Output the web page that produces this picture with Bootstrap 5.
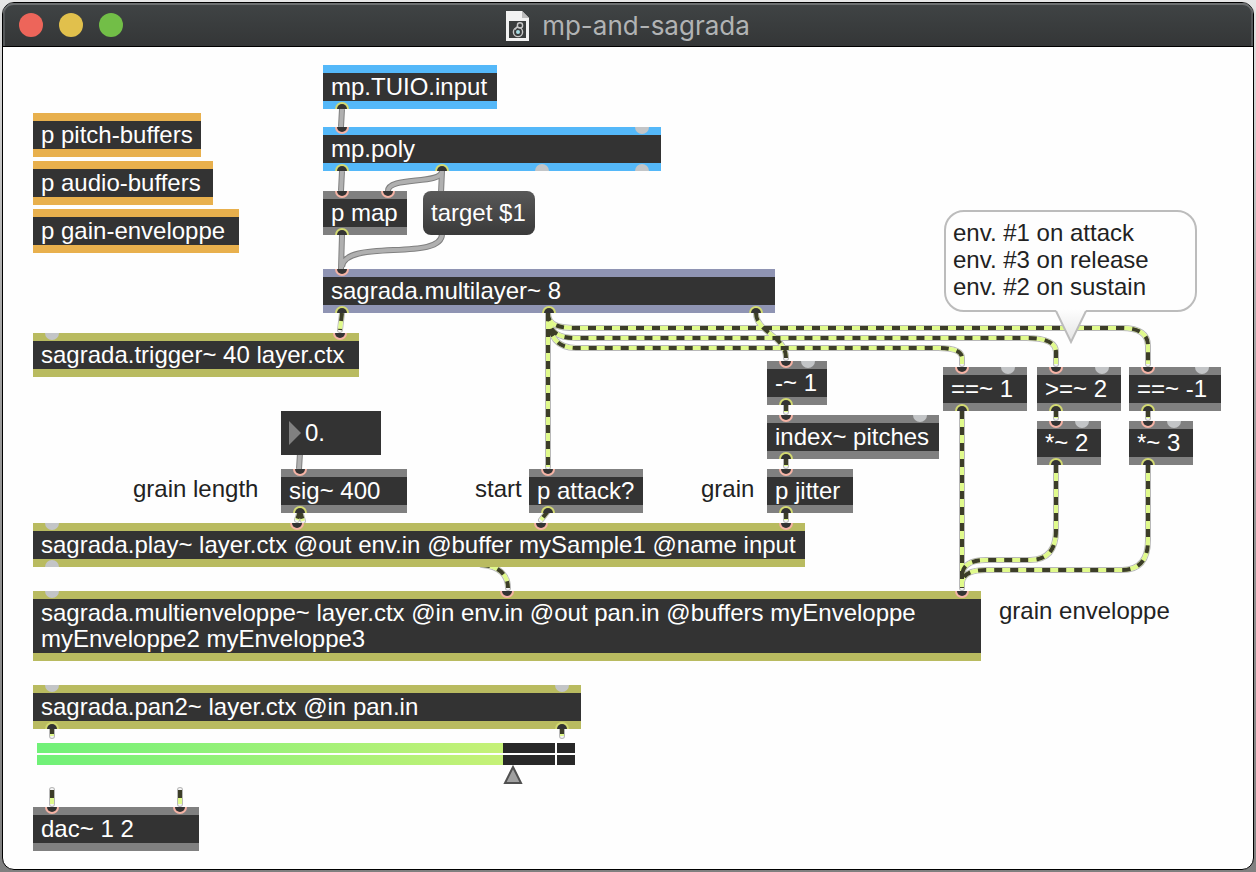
<!DOCTYPE html>
<html lang="en">
<head>
<meta charset="utf-8">
<meta name="viewport" content="width=device-width, initial-scale=1">
<title>mp-and-sagrada</title>
<link href="https://cdn.jsdelivr.net/npm/bootstrap@5.3.0/dist/css/bootstrap.min.css" rel="stylesheet">
<style>
  body {
    background: linear-gradient(#e6e6e6 0, #b0b0b0 270px, #9a9a9a 50%, #808080);
    font-family: "Liberation Sans", Arial, sans-serif;
    font-size: 24px;
    line-height: 28px;
    color: #222;
  }
  .desktop { padding: 2px; }
  .patch-window { border: 1px solid #000; border-radius: 12px; background: #fefefe; }

  /* title bar */
  .title-bar {
    height: 44px;
    padding-top: 2px;
    background: linear-gradient(#404445, #343637);
    border-bottom: 1px solid #000;
    box-shadow: inset 0 2px #6d7071, inset 2px 0 #55585a, inset -2px 0 #55585a;
    border-radius: 11px 11px 0 0;
  }
  .lights { left: 16px; top: 10px; gap: 16px; }
  .light { width: 24px; height: 24px; border: 0; padding: 0; border-radius: 50%; }
  .light-close { background: #ed655a; }
  .light-min { background: #e1c04c; }
  .light-zoom { background: #72be47; }
  .title-group { gap: 12px; }
  .title-text { font: 400 26px/32px Inter, sans-serif; color: #b1b3b4; }

  /* objects on the patcher canvas */
  .canvas > * { position: absolute; }
  .obj {
    min-height: 44px;
    padding: 0 8px;
    border: solid #808080;
    border-width: 8px 0;
    background: #333;
    color: #fff;
    white-space: nowrap;
  }
  .obj-blue { border-color: #54b8f9; }
  .obj-orange { border-color: #e8b04d; }
  .obj-violet { border-color: #8f94b3; }
  .obj-olive { border-color: #b9bb60; }
  .obj-tall { line-height: 26px; padding-top: 1px; padding-bottom: 1px; }
  .msg {
    height: 44px; padding: 0 8px; border: 0; border-radius: 8px;
    background: linear-gradient(#585858, #3a3a3a); color: #fff; text-align: left;
  }
  .numbox { height: 44px; background: #333; padding: 0 8px; gap: 4px; }
  .numbox input { background: none; border: 0; padding: 0; color: #fff; min-width: 0; }
  .bubble {
    border: 2px solid #bcbcbc; border-radius: 20px; background: #fefefe;
    padding: 7px; line-height: 27px; height: 102px;
  }
  .bubble svg { left: 109px; top: 97px; }

  .meter-rows { gap: 2px; }
  .meter-row { height: 10px; gap: 2px; }
  .meter-main { flex: 518; background: #282828; }
  .meter-over { flex: 18; background: #282828; }
  .meter-fill { height: 10px; background: linear-gradient(90deg, #70f178, #c6f177); }
  .gain { appearance: none; -webkit-appearance: none; display: block; height: 20px; background: none; margin: 0; }
  .gain::-webkit-slider-thumb {
    -webkit-appearance: none; width: 20px; height: 20px;
    background: url("data:image/svg+xml,%3Csvg xmlns='http://www.w3.org/2000/svg' width='20' height='20'%3E%3Cpath d='M10 2 18 18H2Z' fill='%23a0a0a0' stroke='%23505050' stroke-width='2'/%3E%3C/svg%3E");
  }

  /* canvas positions of the objects */
  #pitch { left: 30px; top: 66px; width: 168px; }
  #audio { left: 30px; top: 114px; width: 180px; }
  #gainenv { left: 30px; top: 162px; width: 206px; }
  #tuio { left: 320px; top: 18px; width: 174px; }
  #poly { left: 320px; top: 80px; width: 338px; }
  #map { left: 320px; top: 144px; width: 84px; }
  #target { left: 420px; top: 144px; width: 112px; }
  #multilayer { left: 320px; top: 222px; width: 452px; }
  #trigger { left: 30px; top: 286px; width: 326px; }
  #number { left: 278px; top: 364px; width: 100px; }
  #sig { left: 278px; top: 422px; width: 126px; }
  #attack { left: 526px; top: 422px; width: 114px; }
  #minus { left: 764px; top: 314px; width: 60px; }
  #index { left: 764px; top: 368px; width: 172px; }
  #jitter { left: 764px; top: 422px; width: 86px; }
  #eq1 { left: 940px; top: 320px; width: 84px; }
  #ge2 { left: 1034px; top: 320px; width: 84px; }
  #eqm1 { left: 1126px; top: 320px; width: 92px; }
  #mul2 { left: 1034px; top: 374px; width: 64px; }
  #mul3 { left: 1126px; top: 374px; width: 64px; }
  #play { left: 30px; top: 476px; width: 772px; }
  #multienv { left: 30px; top: 544px; width: 948px; }
  #pan { left: 30px; top: 638px; width: 548px; }
  #meter { left: 34px; top: 696px; width: 538px; }
  #dac { left: 30px; top: 760px; width: 166px; }
  #note-length { left: 130px; top: 428px; }
  #note-start { left: 472px; top: 428px; }
  #note-grain { left: 698px; top: 428px; }
  #note-env { left: 996px; top: 550px; }
  #note-bubble { left: 941px; top: 163px; width: 253px; }

  /* patch cords and ports */
  .cords { left: 0; top: 0; overflow: visible; pointer-events: none; }
  .cords .line { fill: none; }
  .ctl-edge { stroke: #808080; stroke-width: 6px; }
  .ctl-core { stroke: #b0b0b0; stroke-width: 4px; }
  .sig-edge { stroke: #b8b8b8; stroke-width: 6px; stroke-linecap: round; }
  .sig-gap { stroke: #f4f4f4; stroke-width: 4px; stroke-linecap: round; }
  .sig-core { stroke: #e0fa8c; stroke-width: 4px; }
  .sig-dash { stroke: #3c3d28; stroke-width: 4px; stroke-dasharray: 8 8; }
</style>
</head>
<body class="vh-100 p-0 m-0">
<div class="desktop d-flex flex-column h-100">
<main class="patch-window d-flex flex-column flex-grow-1">
  <header class="title-bar position-relative d-flex align-items-center justify-content-center flex-shrink-0">
    <div class="lights position-absolute d-flex">
      <button class="light light-close" type="button" aria-label="Close"></button>
      <button class="light light-min" type="button" aria-label="Minimize"></button>
      <button class="light light-zoom" type="button" aria-label="Zoom"></button>
    </div>
    <div class="title-group d-flex align-items-center">
      <svg width="24" height="30" viewBox="0 0 24 30" aria-hidden="true">
        <path d="M0 0H16L23 7V30H0Z" fill="#f2f2f2"/>
        <path d="M16 0V7H23Z" fill="#bcbcbc"/>
        <rect x="3" y="10" width="17" height="17" fill="#3a3d3d"/>
        <circle cx="12" cy="21" r="4.6" fill="none" stroke="#c8c8c8" stroke-width="1.4"/>
        <circle cx="12" cy="21" r="2" fill="#a5dbe2"/>
        <circle cx="14" cy="14.4" r="2.6" fill="none" stroke="#c8c8c8" stroke-width="1.4"/>
        <path d="M11.6 15.2 9 18.6" stroke="#c8c8c8" stroke-width="1.3"/>
      </svg>
      <h1 class="title-text m-0">mp-and-sagrada</h1>
    </div>
  </header>

  <section class="canvas position-relative flex-grow-1">
    <svg class="cords" width="1" height="1" aria-hidden="true">
      <defs>
        <path id="ctl" d="M342 109 341 127M442 171 441 193M442 171C442 185 388 176 388 191M342 171 341 191M342 235 341 269M442 234C442 262 344 238 342 267M300 453 299 469"/>
        <path id="sgl" d="M1148 465V540Q1148 570 1122 570H986Q964 570 962 582M1056 465V530Q1056 560 1030 560H986Q964 560 962 574
          M548 313C548 326 560 328 576 328H1122Q1148 328 1148 346V364M548 313C548 334 560 338 576 338H1026Q1056 338 1056 352V364M548 313C548 340 560 348 576 348H938Q962 348 962 358V364M962 411V588M548 313V467
          M342 313 340 330M756 313C756 332 786 336 786 358M786 403V412M786 457V466M786 511V520M1056 409V418M1148 409V418
          M300 511 303 521M300 511 297 520M548 511 541 520M482 565C500 566 508 576 508 588M52 726V736M562 726V736M52 790V804M180 790V804"/>
      </defs>
      <g transform="translate(-3 -47)">
        <use href="#ctl" class="line ctl-edge"/><use href="#ctl" class="line ctl-core"/>
        <use href="#sgl" class="line sig-edge"/><use href="#sgl" class="line sig-gap"/><use href="#sgl" class="line sig-core"/><use href="#sgl" class="line sig-dash"/>
      </g>
    </svg>

    <div class="obj obj-orange" id="pitch">p pitch-buffers</div>
    <div class="obj obj-orange" id="audio">p audio-buffers</div>
    <div class="obj obj-orange" id="gainenv">p gain-enveloppe</div>

    <div class="obj obj-blue" id="tuio">mp.TUIO.input</div>
    <div class="obj obj-blue" id="poly">mp.poly</div>
    <div class="obj" id="map">p map</div>
    <button class="msg" type="button" id="target">target $1</button>
    <div class="obj obj-violet" id="multilayer">sagrada.multilayer~ 8</div>
    <div class="obj obj-olive" id="trigger">sagrada.trigger~ 40 layer.ctx</div>

    <div class="numbox d-flex align-items-center" id="number">
      <svg class="flex-shrink-0" width="12" height="24" aria-hidden="true"><path d="M0 0 12 12 0 24Z" fill="#808080"/></svg>
      <input class="w-100" type="text" value="0." id="length-value">
    </div>
    <label id="note-length" for="length-value">grain length</label>
    <div class="obj" id="sig">sig~ 400</div>
    <div id="note-start">start</div>
    <div class="obj" id="attack">p attack?</div>
    <div id="note-grain">grain</div>

    <div class="obj" id="minus">-~ 1</div>
    <div class="obj" id="index">index~ pitches</div>
    <div class="obj" id="jitter">p jitter</div>
    <div class="obj" id="eq1">==~ 1</div>
    <div class="obj" id="ge2">&gt;=~ 2</div>
    <div class="obj" id="eqm1">==~ -1</div>
    <div class="obj" id="mul2">*~ 2</div>
    <div class="obj" id="mul3">*~ 3</div>

    <div class="obj obj-olive" id="play">sagrada.play~ layer.ctx @out env.in @buffer mySample1 @name input</div>
    <div class="obj obj-olive obj-tall" id="multienv">sagrada.multienveloppe~ layer.ctx @in env.in @out pan.in @buffers myEnveloppe<br>myEnveloppe2 myEnveloppe3</div>
    <div id="note-env">grain enveloppe</div>
    <div class="obj obj-olive" id="pan">sagrada.pan2~ layer.ctx @in pan.in</div>

    <div id="meter">
      <div class="meter-rows d-flex flex-column">
        <div class="meter-row d-flex"><div class="meter-main"><div class="meter-fill" style="width:90%"></div></div><div class="meter-over"></div></div>
        <div class="meter-row d-flex"><div class="meter-main"><div class="meter-fill" style="width:90%"></div></div><div class="meter-over"></div></div>
      </div>
      <input class="gain w-100" type="range" min="0" max="100" value="90" aria-label="Gain">
    </div>
    <div class="obj" id="dac">dac~ 1 2</div>

    <svg class="cords" width="1" height="1" aria-hidden="true">
      <defs>
        <g id="in"><path d="M-7 0A7 7 0 0 0 7 0Z" fill="#f5b3a5"/><path d="M-5 0A5 5 0 0 0 5 0Z" fill="#333"/></g>
        <g id="out"><path d="M-7 0A7 7 0 0 1 7 0Z" fill="#d3da71"/><path d="M-5 0A5 5 0 0 1 5 0Z" fill="#333"/></g>
        <path id="nin" d="M-7 0A7 7 0 0 0 7 0Z" fill="#c3c5c7"/>
        <path id="nout" d="M-7 0A7 7 0 0 1 7 0Z" fill="#c3c5c7"/>
      </defs>
      <g transform="translate(-3 -47)">
        <!-- connected inlets -->
        <use href="#in" x="342" y="127"/><use href="#in" x="342" y="191"/><use href="#in" x="388" y="191"/><use href="#in" x="342" y="269"/>
        <use href="#in" x="340" y="333"/><use href="#in" x="300" y="469"/><use href="#in" x="297" y="523"/><use href="#in" x="548" y="469"/>
        <use href="#in" x="541" y="523"/><use href="#in" x="786" y="361"/><use href="#in" x="786" y="415"/><use href="#in" x="786" y="469"/>
        <use href="#in" x="786" y="523"/><use href="#in" x="962" y="367"/><use href="#in" x="1056" y="367"/><use href="#in" x="1148" y="367"/>
        <use href="#in" x="1056" y="421"/><use href="#in" x="1148" y="421"/><use href="#in" x="507" y="591"/><use href="#in" x="962" y="591"/>
        <use href="#in" x="52" y="807"/><use href="#in" x="180" y="807"/>
        <!-- free inlets -->
        <use href="#nin" x="642" y="127"/><use href="#nin" x="52" y="333"/><use href="#nin" x="52" y="523"/><use href="#nin" x="52" y="591"/>
        <use href="#nin" x="808" y="361"/><use href="#nin" x="920" y="415"/><use href="#nin" x="1008" y="367"/><use href="#nin" x="1102" y="367"/>
        <use href="#nin" x="1202" y="367"/><use href="#nin" x="1082" y="421"/><use href="#nin" x="1174" y="421"/><use href="#nin" x="52" y="685"/><use href="#nin" x="562" y="685"/>
        <!-- connected outlets -->
        <use href="#out" x="342" y="109"/><use href="#out" x="342" y="171"/><use href="#out" x="442" y="171"/><use href="#out" x="342" y="235"/>
        <use href="#out" x="342" y="313"/><use href="#out" x="549" y="313"/><use href="#out" x="756" y="313"/><use href="#out" x="300" y="513"/>
        <use href="#out" x="548" y="513"/><use href="#out" x="786" y="405"/><use href="#out" x="786" y="459"/><use href="#out" x="786" y="513"/>
        <use href="#out" x="962" y="411"/><use href="#out" x="1056" y="411"/><use href="#out" x="1148" y="411"/><use href="#out" x="1056" y="465"/>
        <use href="#out" x="1148" y="465"/><use href="#out" x="52" y="729"/><use href="#out" x="562" y="729"/>
        <!-- free outlets -->
        <use href="#nout" x="542" y="171"/><use href="#nout" x="642" y="171"/><use href="#nout" x="52" y="567"/>
      </g>
    </svg>

    <div class="bubble" id="note-bubble">
      env. #1 on attack<br>env. #3 on release<br>env. #2 on sustain
      <svg class="position-absolute" width="32" height="36" aria-hidden="true">
        <defs><linearGradient id="tail" x2="0" y2="1"><stop offset="0" stop-color="#fefefe"/><stop offset="1" stop-color="#e4e4e4"/></linearGradient></defs>
        <path d="M1 0V2L16 33 31 2V0Z" fill="url(#tail)"/>
        <path d="M1 2 16 33 31 2" fill="none" stroke="#bcbcbc" stroke-width="2"/>
      </svg>
    </div>
  </section>
</main>
</div>
<script src="https://cdn.jsdelivr.net/npm/bootstrap@5.3.0/dist/js/bootstrap.bundle.min.js"></script>
</body>
</html>
